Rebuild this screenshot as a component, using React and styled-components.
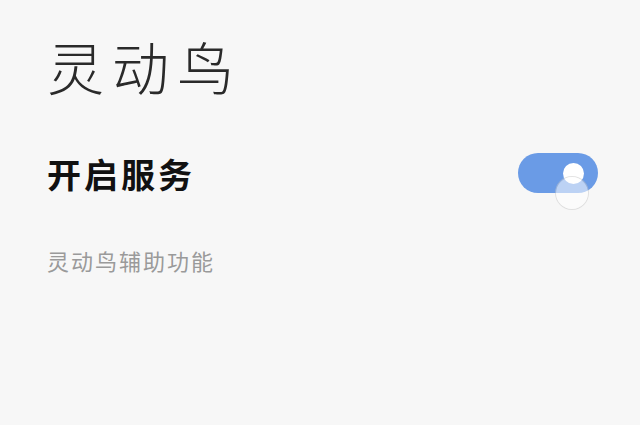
import React, { useState } from "react";
import styled, { createGlobalStyle } from "styled-components";

const GlobalStyle = createGlobalStyle`
  html, body {
    margin: 0;
    padding: 0;
    background: #f7f7f7;
  }
  body {
    font-family: "Noto Sans CJK SC", "Noto Sans", sans-serif;
  }
`;

const Page = styled.div`
  width: 640px;
  height: 425px;
  box-sizing: border-box;
  padding: 0 42px 0 47px;
  background: #f7f7f7;
  overflow: hidden;
`;

const Title = styled.h1`
  margin: 0;
  padding-top: 30px;
  font-size: 57px;
  font-weight: 300;
  line-height: 70px;
  color: #2a2a2a;
  letter-spacing: 8px;
`;

const Row = styled.div`
  display: flex;
  align-items: center;
  justify-content: space-between;
  margin-top: 38px;
  height: 70px;
`;

const RowLabel = styled.span`
  font-size: 34px;
  font-weight: 700;
  color: #111;
  letter-spacing: 3px;
`;

const Track = styled.button`
  position: relative;
  width: 80px;
  height: 40px;
  border: 0;
  padding: 0;
  border-radius: 20px;
  background: ${({ $on }) => ($on ? "#6a9be6" : "#c8c8c8")};
  cursor: pointer;
`;

const Thumb = styled.span`
  position: absolute;
  top: 10px;
  left: ${({ $on }) => ($on ? "45px" : "15px")};
  width: 21px;
  height: 21px;
  border-radius: 50%;
  background: #fff;
`;

const Ripple = styled.span`
  position: absolute;
  top: 24px;
  left: 38px;
  width: 32px;
  height: 32px;
  border-radius: 50%;
  background: rgba(255, 255, 255, 0.55);
  box-shadow: 0 0 0 1px rgba(200, 200, 200, 0.5);
`;

const Caption = styled.div`
  margin-top: 36px;
  font-size: 22px;
  color: #9a9a9a;
  letter-spacing: 2px;
`;

export default function App() {
  const [on, setOn] = useState(true);

  return (
    <Page>
      <GlobalStyle />
      <Title>灵动鸟</Title>
      <Row>
        <RowLabel>开启服务</RowLabel>
        <Track $on={on} onClick={() => setOn(!on)}>
          <Thumb $on={on} />
          {on && <Ripple />}
        </Track>
      </Row>
      <Caption>灵动鸟辅助功能</Caption>
    </Page>
  );
}
